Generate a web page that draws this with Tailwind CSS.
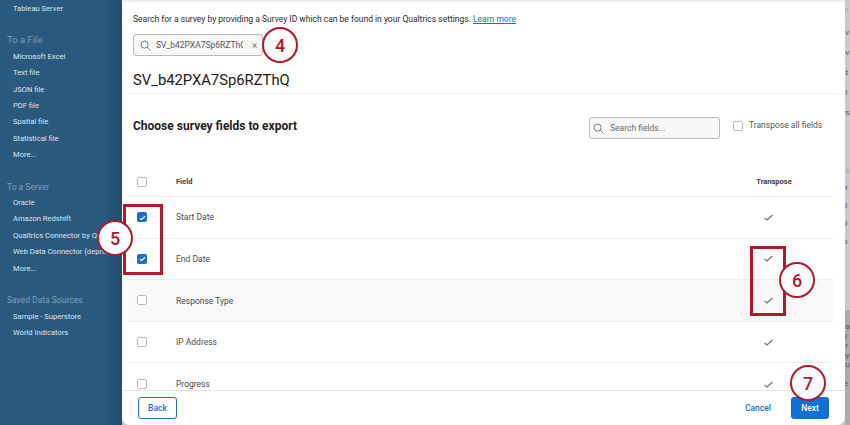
<!DOCTYPE html>
<html lang="en">
<head>
    <meta charset="UTF-8">
    <title>Export survey</title>
    <script src="https://cdn.jsdelivr.net/npm/@tailwindcss/browser@4"></script>
</head>
<body class="w-[850px] h-[425px] overflow-hidden font-['Roboto','Liberation_Sans',sans-serif] bg-[#c9c9c9]">
<div class="relative flex h-[425px] w-[850px] overflow-hidden">

    <!-- Sidebar -->
    <aside class="w-[122px] shrink-0 h-full bg-gradient-to-r from-[#29597f] from-85% to-[#214c6e] text-[7.6px] leading-[16.4px] text-[#dbe5ec] overflow-hidden whitespace-nowrap pl-[13px] pt-[1px]">
        <div>Tableau Server</div>
        <div class="mt-[15px] -ml-[6px] text-[#7f9fb8] text-[9.5px]">To a File</div>
        <div>Microsoft Excel</div>
        <div>Text file</div>
        <div>JSON file</div>
        <div>PDF file</div>
        <div>Spatial file</div>
        <div>Statistical file</div>
        <div>More...</div>
        <div class="mt-[15px] -ml-[6px] text-[#7f9fb8] text-[8.5px]">To a Server</div>
        <div>Oracle</div>
        <div>Amazon Redshift</div>
        <div>Qualtrics Connector by Qualtrics</div>
        <div>Web Data Connector (deprecated)</div>
        <div>More...</div>
        <div class="mt-[15px] -ml-[6px] text-[#7f9fb8] text-[8.5px]">Saved Data Sources</div>
        <div>Sample - Superstore</div>
        <div>World Indicators</div>
    </aside>

    <!-- Modal -->
    <main class="w-[723px] shrink-0 h-full bg-white rounded-b-lg flex flex-col text-[#1f2023] overflow-hidden">
        <div class="h-[390px] overflow-hidden border-t-2 border-[#f0f0f0]">
            <div class="pl-[11px]">
                <p class="pt-[11px] text-[8.5px] leading-[12px] text-[#2b2c30]">Search for a survey by providing a Survey ID which can be found in your Qualtrics settings. <a class="text-[#1a6fd0] underline">Learn more</a></p>
                <div class="mt-[9px] w-[130px] h-[22px] border border-[#b8babd] bg-[#f7f7f7] rounded-[3px] flex items-center pl-[6px] text-[8.5px] text-[#55585e]">
                    <svg class="w-[11px] h-[11px] shrink-0" viewBox="0 0 12 12" fill="none" stroke="#6b6e73" stroke-width="1"><circle cx="5" cy="5" r="3.9"/><path d="M7.9 7.9 11.5 11.5"/></svg>
                    <span class="ml-[5px] w-[87px] shrink-0 overflow-hidden whitespace-nowrap">SV_b42PXA7Sp6RZThQ</span>
                    <span class="ml-[9px] text-[10px] text-[#777a80]">×</span>
                </div>
                <h1 class="mt-[13px] text-[14.8px] leading-[22px] text-[#1f2023] pb-[1px]">SV_b42PXA7Sp6RZThQ</h1>
            </div>
            <div class="ml-[6px] mr-[7px] border-b border-[#eeeeee] mt-[1px]"></div>

            <div class="flex items-start pl-[11px] pt-[23px] h-[61px]">
                <h2 class="text-[12px] leading-[18px] font-bold text-[#1f2023] w-[456px]">Choose survey fields to export</h2>
                <div class="w-[131px] h-[22px] border border-[#b8babd] bg-[#f7f7f7] rounded-[3px] flex items-center pl-[3px] text-[8.5px] text-[#6a6d72]">
                    <svg class="w-[11px] h-[11px] shrink-0" viewBox="0 0 12 12" fill="none" stroke="#6b6e73" stroke-width="1"><circle cx="5" cy="5" r="3.9"/><path d="M7.9 7.9 11.5 11.5"/></svg>
                    <span class="ml-[6px]">Search fields...</span>
                </div>
                <div class="ml-[13px] flex items-center h-[17px] text-[8.5px] text-[#55585e]">
                    <span class="w-[10px] h-[10px] border border-[#b8babd] rounded-[2px] bg-white"></span>
                    <span class="ml-[6px]">Transpose all fields</span>
                </div>
            </div>

            <!-- Table -->
            <div class="ml-[6px] w-[705px] text-[8.5px] text-[#4a4c51]">
                <div class="h-[42px] flex items-center border-b border-[#eeeeee] pt-[12px]">
                    <div class="w-[28px] mr-[20px] flex justify-center"><span class="w-[10px] h-[10px] border border-[#b8babd] rounded-[2px] bg-white"></span></div>
                    <div class="w-[580px] text-[7.5px] font-bold text-[#3a3c40]">Field</div>
                    <div class="w-[36px] text-[7.5px] font-bold text-[#3a3c40] whitespace-nowrap flex justify-center">Transpose</div>
                </div>
                <div class="h-[41.6px] flex items-center border-b border-[#eeeeee]">
                    <div class="w-[28px] mr-[20px] flex justify-center"><span class="w-[10px] h-[10px] bg-[#1a6fd0] rounded-[2px] flex items-center justify-center"><svg class="w-[7px] h-[7px]" viewBox="0 0 8 8" fill="none" stroke="#fff" stroke-width="1.3"><path d="M1 5 3 6.3 7 2.5"/></svg></span></div>
                    <div class="w-[580px] pt-px">Start Date</div>
                    <div class="w-[24px] flex justify-center"><svg class="w-[9px] h-[7px]" viewBox="0 0 9 7" fill="none" stroke="#707277" stroke-width="1.2"><path d="M.5 4 3 6 8.5 1"/></svg></div>
                </div>
                <div class="h-[41.6px] flex items-center border-b border-[#eeeeee]">
                    <div class="w-[28px] mr-[20px] flex justify-center"><span class="w-[10px] h-[10px] bg-[#1a6fd0] rounded-[2px] flex items-center justify-center"><svg class="w-[7px] h-[7px]" viewBox="0 0 8 8" fill="none" stroke="#fff" stroke-width="1.3"><path d="M1 5 3 6.3 7 2.5"/></svg></span></div>
                    <div class="w-[580px] pt-px">End Date</div>
                    <div class="w-[24px] flex justify-center"><svg class="w-[9px] h-[7px]" viewBox="0 0 9 7" fill="none" stroke="#707277" stroke-width="1.2"><path d="M.5 4 3 6 8.5 1"/></svg></div>
                </div>
                <div class="h-[41.6px] flex items-center border-b border-[#eeeeee] bg-[#f8f8f8]">
                    <div class="w-[28px] mr-[20px] flex justify-center"><span class="w-[10px] h-[10px] border border-[#b8babd] rounded-[2px] bg-white"></span></div>
                    <div class="w-[580px] pt-px">Response Type</div>
                    <div class="w-[24px] flex justify-center"><svg class="w-[9px] h-[7px]" viewBox="0 0 9 7" fill="none" stroke="#707277" stroke-width="1.2"><path d="M.5 4 3 6 8.5 1"/></svg></div>
                </div>
                <div class="h-[41.6px] flex items-center border-b border-[#eeeeee]">
                    <div class="w-[28px] mr-[20px] flex justify-center"><span class="w-[10px] h-[10px] border border-[#b8babd] rounded-[2px] bg-white"></span></div>
                    <div class="w-[580px] pt-px">IP Address</div>
                    <div class="w-[24px] flex justify-center"><svg class="w-[9px] h-[7px]" viewBox="0 0 9 7" fill="none" stroke="#707277" stroke-width="1.2"><path d="M.5 4 3 6 8.5 1"/></svg></div>
                </div>
                <div class="h-[41.6px] flex items-center">
                    <div class="w-[28px] mr-[20px] flex justify-center"><span class="w-[10px] h-[10px] border border-[#b8babd] rounded-[2px] bg-white"></span></div>
                    <div class="w-[580px] pt-px">Progress</div>
                    <div class="w-[24px] flex justify-center"><svg class="w-[9px] h-[7px]" viewBox="0 0 9 7" fill="none" stroke="#707277" stroke-width="1.2"><path d="M.5 4 3 6 8.5 1"/></svg></div>
                </div>
            </div>
        </div>

        <!-- Footer -->
        <footer class="h-[35px] border-t border-[#e4e4e4] flex items-start pt-[6px] pl-[16px] pr-[16px] text-[8.5px] font-medium">
            <button class="w-[39px] h-[22px] border border-[#1a6fd0] rounded-[3px] text-[#1a6fd0]">Back</button>
            <button class="ml-auto h-[22px] text-[#1a6fd0]">Cancel</button>
            <button class="ml-[20px] w-[38px] h-[22px] bg-[#0f6fd6] rounded-[3px] text-white">Next</button>
        </footer>
    </main>

    <!-- Background window strip -->
    <div class="w-[5px] shrink-0 h-full flex flex-col text-[8px] leading-[20px] text-[#55565a] overflow-hidden whitespace-nowrap">
        <div class="h-[310px] overflow-hidden -ml-[4px]">
            <div class="text-[#a0a0a0]">to</div>
            <div class="mt-[3px]">ev</div><div>ov</div><div>ot</div><div>ul</div><div>es</div>
            <div class="mt-[40px] text-[#a0a0a0] leading-[16px]">es</div>
            <div class="leading-[18px]">er</div><div class="leading-[18px]">al</div><div class="leading-[18px]">al</div><div class="leading-[18px]">lo</div>
        </div>
        <div class="h-[115px] bg-[#ababab] pt-[12px] leading-[9.5px] pl-0">
            <div class="-ml-[4px]">sa</div><div class="-ml-[4px]">al</div><div class="-ml-[4px]">nr</div><div class="-ml-[4px]">ny</div><div class="-ml-[4px]">su</div>
            <div class="mt-[9px] -ml-[4px]">re</div>
        </div>
    </div>

    <!-- Annotations -->
    <div class="absolute left-[262px] top-[27px] w-[36px] h-[36px] rounded-full border-[2.5px] border-[#b5182e] bg-white flex items-center justify-center text-[18px] font-medium text-[#b5182e]">4</div>
    <div class="absolute left-[123px] top-[204px] w-[40px] h-[71px] border-[3px] border-[#b5182e]"></div>
    <div class="absolute left-[97px] top-[220px] w-[36px] h-[36px] rounded-full border-[2.5px] border-[#b5182e] bg-white flex items-center justify-center text-[18px] font-medium text-[#b5182e]">5</div>
    <div class="absolute left-[750px] top-[246px] w-[36px] h-[70px] border-[3px] border-[#b5182e]"></div>
    <div class="absolute left-[779px] top-[262px] w-[36px] h-[36px] rounded-full border-[2.5px] border-[#b5182e] bg-white flex items-center justify-center text-[18px] font-medium text-[#b5182e]">6</div>
    <div class="absolute left-[790px] top-[365px] w-[36px] h-[36px] rounded-full border-[2.5px] border-[#b5182e] bg-white flex items-center justify-center text-[18px] font-medium text-[#b5182e]">7</div>
</div>
</body>
</html>
